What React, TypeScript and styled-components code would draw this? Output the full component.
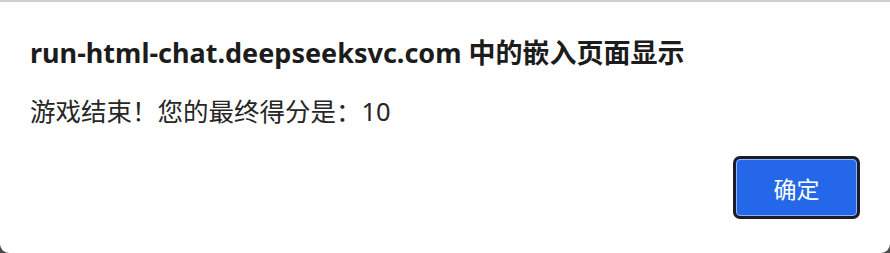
import React from "react";
import styled, { createGlobalStyle } from "styled-components";

const GlobalStyle = createGlobalStyle`
  html, body {
    margin: 0;
    padding: 0;
    background: #4a4a4a;
  }
  body {
    font-family: "Noto Sans", "Noto Sans CJK SC", sans-serif;
  }
`;

const Dialog = styled.div`
  box-sizing: border-box;
  width: 890px;
  height: 253px;
  background: #ffffff;
  border-top: 2px solid #cfcfcf;
  border-radius: 0 0 9px 9px;
  padding: 34px 30px 0 30px;
  display: flex;
  flex-direction: column;
`;

const Title = styled.h1`
  margin: 0;
  font-size: 27px;
  line-height: 34px;
  font-weight: 700;
  color: #1c1c1c;
`;

const Message = styled.p`
  margin: 25px 0 0 0;
  font-size: 25.5px;
  line-height: 32px;
  color: #262626;
`;

const Actions = styled.div`
  display: flex;
  justify-content: flex-end;
  margin-top: 32px;
  padding-right: 3px;
`;

const Button = styled.button`
  box-sizing: border-box;
  width: 121px;
  height: 57px;
  border: 1px solid #8fb4ff;
  border-radius: 4px;
  background: #2468e9;
  color: #ffffff;
  font-family: "Noto Sans", "Noto Sans CJK SC", sans-serif;
  font-size: 23px;
  box-shadow: 0 0 0 3px #1b1d26;
  cursor: pointer;
`;

export default function App() {
  return (
    <>
      <GlobalStyle />
      <Dialog>
        <Title>run-html-chat.deepseeksvc.com 中的嵌入页面显示</Title>
        <Message>游戏结束！您的最终得分是：10</Message>
        <Actions>
          <Button>确定</Button>
        </Actions>
      </Dialog>
    </>
  );
}
